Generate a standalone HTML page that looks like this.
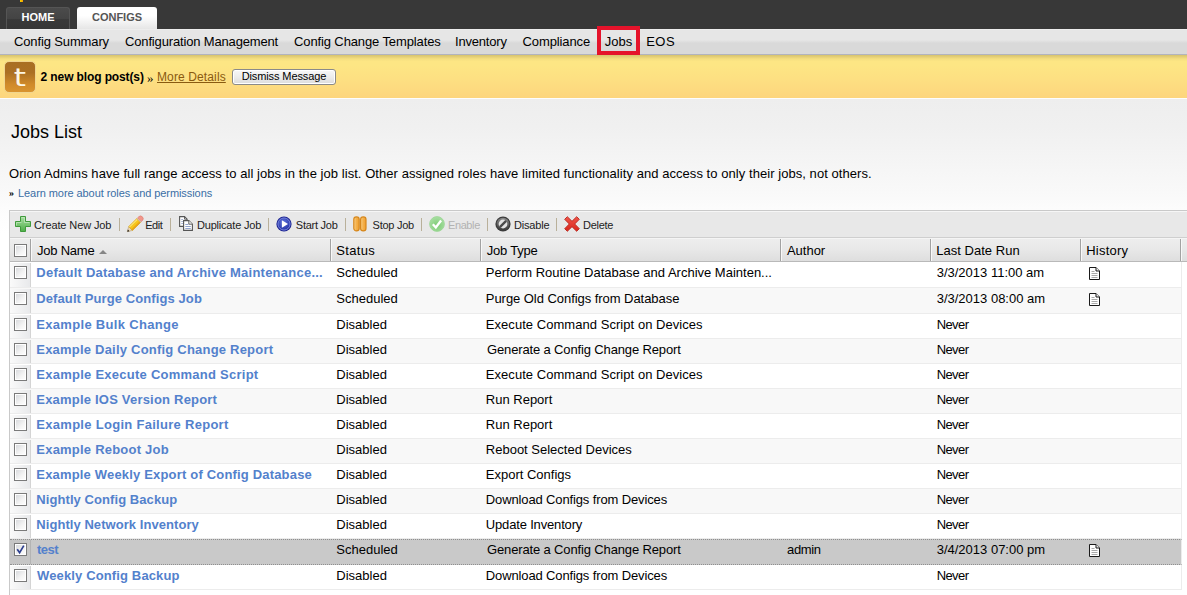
<!DOCTYPE html>
<html><head><meta charset="utf-8"><title>Jobs List</title>
<style>
*{box-sizing:border-box;margin:0;padding:0}
html,body{width:1187px;height:595px;overflow:hidden}
body{font-family:"Liberation Sans",sans-serif;font-size:13px;color:#000;background:#fff;position:relative}
i{font-style:normal}
.x{position:absolute;white-space:nowrap}
#top{position:absolute;left:0;top:0;width:1187px;height:29px;background:#383838}
#mark{position:absolute;left:20px;top:0;width:3px;height:2px;background:linear-gradient(90deg,#f5d800,#f59a00)}
.tab{position:absolute;text-align:center;border-radius:3px 3px 0 0;font-weight:bold;font-size:11px}
#home{left:6px;top:7px;width:64px;height:22px;background:linear-gradient(#4b4b4b,#444 50%,#393939 55%,#363636);border:1px solid #555;border-bottom:none;color:#fff;line-height:19px}
#configs{left:77px;top:7px;width:80px;height:22px;background:linear-gradient(#fff 0,#fff 40%,#e6e6e6 100%);color:#555;line-height:21px}
#sub{position:absolute;left:0;top:29px;width:1187px;height:26px;background:linear-gradient(#f0f0f0 0,#e6e6e6 1.5px,#e6e6e6 11px,#d9d9d9 14px,#d9d9d9 100%);border-bottom:1px solid #b2b4be}
.sn{line-height:25px;font-size:13px}
#jobsbox{position:absolute;left:597px;top:26px;width:43px;height:29px;border:4px solid #e5132b}
#note{position:absolute;left:0;top:55px;width:1187px;height:43px;background:linear-gradient(#d6c36e,#e6d077 2px,#f5df80 4px,#fde684 6.5px,#fde684 10px,#fde082 55%,#fdd57d 100%);border-bottom:0}#nline{position:absolute;left:0;top:98px;width:1187px;height:1px;background:#fdfdfd}
#ticon{position:absolute;left:4px;top:61px;width:32px;height:32px;border-radius:5px;background:linear-gradient(#a96f22,#ab7023 35%,#d08a2a 75%,#d9942e);border:1px solid #f0d58f;color:#fdf6e3;font-size:25px;line-height:31px;text-align:center;font-family:"DejaVu Sans",sans-serif}
#ticon span{display:inline-block;transform:scaleX(1.25)}
.nb{font-weight:bold;font-size:12px;line-height:43px}
.nr{font-size:13px;line-height:43px;font-family:"Liberation Serif",serif}
.nm{font-size:12px;line-height:43px;color:#8a5a10;text-decoration:underline}
#btn{position:absolute;left:232px;top:69px;width:104px;height:16px;border:1px solid #8a8a8a;border-radius:3px;background:linear-gradient(#f8f8f8,#ececec 50%,#dcdcdc);box-shadow:inset 0 0 0 1px #fff}
.bt{font-size:11px;line-height:17px}
#main{position:absolute;left:0;top:99px;width:1187px;height:496px;background:linear-gradient(#eeeeee,#f0f0f0 28px,#f5f5f5 65px,#fafafa 100px,#fdfdfd 115px,#fff 135px)}
.h1{font-size:18px;line-height:22px}
.desc{font-size:13px;line-height:17px}
.lr{font-size:10px;line-height:14px;font-weight:bold;font-family:"Liberation Serif",serif}
.learn{font-size:11px;line-height:14px;color:#3a6ea5}
#panel{position:absolute;left:9px;top:210px;width:1190px;height:400px;border:1px solid #c9c9c9;background:#fff}
#tbar{position:absolute;left:10px;top:211px;width:1177px;height:27px;background:#e8e8e8;border-top:1px solid #f6f6f6;border-bottom:1px solid #cfcfcf}
.tb{font-size:11px;line-height:27px;color:#222}
.tb.dis{color:#b2b2b2}
svg{position:absolute}
.sep{position:absolute;top:218px;width:1px;height:13px;background:#b9b09a}
#hdr{position:absolute;left:10px;top:238px;width:1177px;height:24px;background:linear-gradient(#f9f9f9 0,#ededed 1.5px,#e8e8e8 50%,#dedede 100%);border-bottom:1px solid #b9b9b9}
.hd{font-size:13px;line-height:24px}
.hs{position:absolute;top:239px;width:2px;height:22px;border-left:1px solid #a2a2a2;background:#f8f8f8}
.arr{position:absolute;left:98.500px;top:250px;width:0;height:0;border-left:4px solid transparent;border-right:4px solid transparent;border-bottom:4.500px solid #858585}
.row{position:absolute;left:10px;width:1172px;border-bottom:1px solid #ececec;border-right:1px solid #ececec;background:#fff}
.row.alt{background:#f8f8f8}
.row.sel{background:#c9c9c9;border-top:1px dotted #8f8f8f;border-bottom:1px dotted #8f8f8f;border-left:1px dotted #8f8f8f}
.cbc{position:absolute;left:0;top:1px;bottom:0;width:21px;background:linear-gradient(90deg,#fafafa,#e8e9eb);border-right:1px solid #d4d4d4}
.sel .cbc{background:#c6c6c6;border-right-color:#b4b4b4;left:-1px;top:0}
.cb{position:absolute;left:4px;top:4px;width:13px;height:13px;border:1px solid #7a7a7a;background:linear-gradient(135deg,#d4d6da,#f4f4f4 60%,#fff);box-shadow:inset 0 0 0 1px #fff}
.sel .cb{left:3px;top:3px}
.ck{position:absolute;left:0;top:0}
.rn{font-weight:bold;color:#5381cc;font-size:13px;line-height:22px}
.rc{font-size:13px;line-height:22px}
</style></head><body>
<div id="top"></div><div id="mark"></div>
<div class="tab" id="home">HOME</div>
<div class="tab" id="configs">CONFIGS</div>
<div id="sub"></div>
<div id="jobsbox"></div>
<div id="note"></div><div id="nline"></div>
<div id="ticon"><span>t</span></div>
<div id="btn"></div>
<div id="main"></div>
<div id="panel"></div>
<div id="tbar"></div>
<svg style="left:15px;top:216px" width="16" height="16" viewBox="0 0 16 16"><defs><linearGradient id="gp" x1="0" y1="0" x2="0" y2="1"><stop offset="0" stop-color="#a9dda3"/><stop offset="0.5" stop-color="#7cc775"/><stop offset="1" stop-color="#4fae49"/></linearGradient></defs><path d="M5.5 0.5h5v5h5v5h-5v5h-5v-5h-5v-5h5z" fill="url(#gp)" stroke="#3f9a3b" stroke-width="1"/><path d="M6.5 1.5h3v5h5M1.5 9.500v-3h5" fill="none" stroke="#c4e8c0" stroke-width="1" opacity=".7"/></svg><svg style="left:126px;top:215px" width="18" height="18" viewBox="0 0 18 18"><g transform="translate(1.3,16.7) rotate(-44.5)"><path d="M0 0L4.6 -2.7V2.7z" fill="#ead6b4" stroke="#b89a6a" stroke-width="0.5"/><path d="M0 0L1.9 -1.1V1.1z" fill="#111"/><rect x="4.6" y="-2.7" width="11.4" height="5.4" fill="#f6c61c"/><rect x="4.6" y="-2.7" width="11.4" height="1.5" fill="#fbe372"/><rect x="4.6" y="1.2" width="11.4" height="1.5" fill="#e9a51b"/><rect x="4.6" y="-2.7" width="11.4" height="5.4" fill="none" stroke="#d49a14" stroke-width="0.5"/><rect x="16" y="-2.7" width="1.2" height="5.4" fill="#d8b8a8"/><path d="M17.2 -2.7h1.3a2.7 2.7 0 0 1 0 5.4h-1.3z" fill="#f1968b" stroke="#dc7a70" stroke-width="0.5"/></g></svg><svg style="left:179px;top:216px" width="15" height="15" viewBox="0 0 15 15"><path d="M0.6 0.6h4.9l2.6 2.6v7.2h-7.500z" fill="#fff" stroke="#555" stroke-width="1.1"/><path d="M5.500 0.6v2.6h2.6" fill="none" stroke="#555" stroke-width="0.9"/><path d="M2.2 3.5h2M2.2 5.500h2M2.2 7.500h2" stroke="#a9b6d4" stroke-width="1"/><path d="M4.600 4.600h5.200l3.600 3.600v6.200h-8.800z" fill="#fff" stroke="#555" stroke-width="1.1"/><path d="M9.800 4.600v3.600h3.600" fill="#f2f2f2" stroke="#555" stroke-width="0.9"/><path d="M6.300 8.500h3M6.300 10.500h5.500M6.300 12.500h5.500" stroke="#93a4cc" stroke-width="1.1"/></svg><svg style="left:276px;top:216px" width="16" height="16" viewBox="0 0 16 16"><defs><radialGradient id="gs" cx="0.45" cy="0.35" r="0.75"><stop offset="0" stop-color="#5f74dc"/><stop offset="1" stop-color="#1d2a9e"/></radialGradient></defs><circle cx="8" cy="8" r="7.600" fill="#1a2290"/><circle cx="8" cy="8" r="6.100" fill="url(#gs)" stroke="#8f9cec" stroke-width="0.8"/><path d="M5.900 4.300l6.100 3.700-6.100 3.700z" fill="#fff"/></svg><svg style="left:353px;top:216px" width="14" height="16" viewBox="0 0 14 16"><defs><linearGradient id="go" x1="0" y1="0" x2="1" y2="0"><stop offset="0" stop-color="#f9d08a"/><stop offset="0.5" stop-color="#f4b04a"/><stop offset="1" stop-color="#f0a030"/></linearGradient></defs><rect x="0.800" y="0.900" width="5.400" height="14" rx="2.600" fill="url(#go)" stroke="#d6871c" stroke-width="1.200"/><rect x="7.600" y="0.900" width="5.400" height="14" rx="2.600" fill="url(#go)" stroke="#d6871c" stroke-width="1.200"/></svg><svg style="left:429px;top:216px" width="16" height="16" viewBox="0 0 16 16"><defs><radialGradient id="ge" cx="0.5" cy="0.6" r="0.6"><stop offset="0" stop-color="#7ccb74"/><stop offset="1" stop-color="#a9dfa3"/></radialGradient></defs><circle cx="8" cy="8" r="7.400" fill="url(#ge)" stroke="#9ad694" stroke-width="0.800"/><path d="M3.800 8.300l3 3.100 5.300-6.900" fill="none" stroke="#fff" stroke-width="2.300"/></svg><svg style="left:495px;top:216px" width="16" height="16" viewBox="0 0 16 16"><defs><linearGradient id="gd" x1="0" y1="0" x2="0" y2="1"><stop offset="0" stop-color="#8a8a8a"/><stop offset="1" stop-color="#3a3a3a"/></linearGradient></defs><circle cx="8" cy="8" r="7.600" fill="#3c3c3c"/><circle cx="8" cy="8" r="6.300" fill="url(#gd)"/><circle cx="8" cy="8" r="4.400" fill="#e2e2e2"/><path d="M4.900 11.100l6.200-6.200" stroke="#4a4a4a" stroke-width="2.300"/></svg><svg style="left:564px;top:216px" width="16" height="16" viewBox="0 0 16 16"><defs><linearGradient id="gx" x1="0" y1="0" x2="0" y2="1"><stop offset="0" stop-color="#f0554a"/><stop offset="1" stop-color="#d8261c"/></linearGradient></defs><path d="M0.700 3.300L3.300 0.700 8 5.300 12.700 0.700 15.300 3.300 10.700 8 15.300 12.700 12.700 15.300 8 10.700 3.300 15.300 0.700 12.700 5.300 8z" fill="url(#gx)" stroke="#b9251b" stroke-width="0.900" stroke-linejoin="round"/></svg><i class="sep" style="left:119px"></i><i class="sep" style="left:170px"></i><i class="sep" style="left:268px"></i><i class="sep" style="left:345px"></i><i class="sep" style="left:421px"></i><i class="sep" style="left:487px"></i><i class="sep" style="left:556px"></i>
<div id="hdr"></div>
<i class="hs" style="left:30px"></i><i class="hs" style="left:330px"></i><i class="hs" style="left:480px"></i><i class="hs" style="left:780px"></i><i class="hs" style="left:930px"></i><i class="hs" style="left:1080px"></i><i class="hs" style="left:1180px"></i><i class="cb" style="left:14px;top:244px"></i><i class="arr"></i>
<div class="row" style="top:262px;height:26px"><i class="cbc"></i><i class="cb"></i></div>
<svg class="doc" style="left:1089px;top:267px" width="11" height="13" viewBox="0 0 11 13"><path d="M0.5 0.5h6.5l3.5 3.5v8.5h-10z" fill="#fff" stroke="#1a1a1a" stroke-width="1"/><path d="M7 0.5v3.5h3.5" fill="#eee" stroke="#1a1a1a" stroke-width="1"/><path d="M2.5 4.5h3M2.5 6.5h6M2.5 8.5h6M2.5 10.500h6" stroke="#aaa" stroke-width="1"/></svg>
<div class="row alt" style="top:288px;height:26px"><i class="cbc"></i><i class="cb"></i></div>
<svg class="doc" style="left:1089px;top:293px" width="11" height="13" viewBox="0 0 11 13"><path d="M0.5 0.5h6.5l3.5 3.5v8.5h-10z" fill="#fff" stroke="#1a1a1a" stroke-width="1"/><path d="M7 0.5v3.5h3.5" fill="#eee" stroke="#1a1a1a" stroke-width="1"/><path d="M2.5 4.5h3M2.5 6.5h6M2.5 8.5h6M2.5 10.500h6" stroke="#aaa" stroke-width="1"/></svg>
<div class="row" style="top:314px;height:25px"><i class="cbc"></i><i class="cb"></i></div>
<div class="row alt" style="top:339px;height:25px"><i class="cbc"></i><i class="cb"></i></div>
<div class="row" style="top:364px;height:25px"><i class="cbc"></i><i class="cb"></i></div>
<div class="row alt" style="top:389px;height:25px"><i class="cbc"></i><i class="cb"></i></div>
<div class="row" style="top:414px;height:25px"><i class="cbc"></i><i class="cb"></i></div>
<div class="row alt" style="top:439px;height:25px"><i class="cbc"></i><i class="cb"></i></div>
<div class="row" style="top:464px;height:25px"><i class="cbc"></i><i class="cb"></i></div>
<div class="row alt" style="top:489px;height:25px"><i class="cbc"></i><i class="cb"></i></div>
<div class="row" style="top:514px;height:25px"><i class="cbc"></i><i class="cb"></i></div>
<div class="row alt sel" style="top:539px;height:26px"><i class="cbc"></i><i class="cb"><svg class="ck" width="11" height="11" viewBox="0 0 11 11"><path d="M2.2 5.2L4.6 8.6L8.8 1.6" fill="none" stroke="#2f4190" stroke-width="1.7"/></svg></i></div>
<svg class="doc" style="left:1089px;top:544px" width="11" height="13" viewBox="0 0 11 13"><path d="M0.5 0.5h6.5l3.5 3.5v8.5h-10z" fill="#fff" stroke="#1a1a1a" stroke-width="1"/><path d="M7 0.5v3.5h3.5" fill="#eee" stroke="#1a1a1a" stroke-width="1"/><path d="M2.5 4.5h3M2.5 6.5h6M2.5 8.5h6M2.5 10.500h6" stroke="#aaa" stroke-width="1"/></svg>
<div class="row" style="top:565px;height:25px"><i class="cbc"></i><i class="cb"></i></div>
<span id="sn1" class="x sn" style="left:14.00px;top:29px;letter-spacing:-0.131px;">Config Summary</span>
<span id="sn2" class="x sn" style="left:125.00px;top:29px;letter-spacing:-0.157px;">Configuration Management</span>
<span id="sn3" class="x sn" style="left:294.00px;top:29px;letter-spacing:-0.118px;">Config Change Templates</span>
<span id="sn4" class="x sn" style="left:455.00px;top:29px;letter-spacing:-0.188px;">Inventory</span>
<span id="sn5" class="x sn" style="left:522.60px;top:29px;letter-spacing:-0.122px;">Compliance</span>
<span id="sn6" class="x sn" style="left:604.70px;top:29px;">Jobs</span>
<span id="sn7" class="x sn" style="left:646.20px;top:29px;letter-spacing:0.500px;">EOS</span>
<span id="nb" class="x nb" style="left:40.60px;top:56px;letter-spacing:-0.118px;">2 new blog post(s)</span>
<span id="nr" class="x nr" style="left:147.00px;top:56px;">»</span>
<span id="nm" class="x nm" style="left:157.00px;top:56px;letter-spacing:0.120px;">More Details</span>
<span id="bt" class="x bt" style="left:241.70px;top:68px;letter-spacing:-0.114px;">Dismiss Message</span>
<span id="h1" class="x h1" style="left:11.00px;top:121px;">Jobs List</span>
<span id="desc" class="x desc" style="left:9.00px;top:165px;letter-spacing:0.055px;">Orion Admins have full range access to all jobs in the job list. Other assigned roles have limited functionality and access to only their jobs, not others.</span>
<span id="lr" class="x lr" style="left:9.00px;top:186px;">»</span>
<span id="learn" class="x learn" style="left:18.00px;top:186px;letter-spacing:-0.073px;">Learn more about roles and permissions</span>
<span id="tb0" class="x tb" style="left:34.00px;top:212px;letter-spacing:-0.108px;">Create New Job</span>
<span id="tb1" class="x tb" style="left:145.20px;top:212px;letter-spacing:-0.433px;">Edit</span>
<span id="tb2" class="x tb" style="left:197.00px;top:212px;letter-spacing:-0.200px;">Duplicate Job</span>
<span id="tb3" class="x tb" style="left:295.80px;top:212px;letter-spacing:-0.250px;">Start Job</span>
<span id="tb4" class="x tb" style="left:372.60px;top:212px;letter-spacing:-0.257px;">Stop Job</span>
<span id="tb5" class="x tb dis" style="left:448.00px;top:212px;letter-spacing:-0.400px;">Enable</span>
<span id="tb6" class="x tb" style="left:514.00px;top:212px;letter-spacing:-0.183px;">Disable</span>
<span id="tb7" class="x tb" style="left:583.00px;top:212px;letter-spacing:-0.280px;">Delete</span>
<span id="hd0" class="x hd" style="left:37.00px;top:239px;letter-spacing:-0.229px;">Job Name</span>
<span id="hd1" class="x hd" style="left:336.30px;top:239px;letter-spacing:0.340px;">Status</span>
<span id="hd2" class="x hd" style="left:486.70px;top:239px;letter-spacing:-0.214px;">Job Type</span>
<span id="hd3" class="x hd" style="left:786.90px;top:239px;">Author</span>
<span id="hd4" class="x hd" style="left:936.20px;top:239px;letter-spacing:0.033px;">Last Date Run</span>
<span id="hd5" class="x hd" style="left:1086.20px;top:239px;letter-spacing:0.233px;">History</span>
<span id="n0" class="x rn" style="left:36.30px;top:262px;letter-spacing:0.243px;">Default Database and Archive Maintenance...</span>
<span id="s0" class="x rc" style="left:336.30px;top:262px;">Scheduled</span>
<span id="t0" class="x rc" style="left:485.80px;top:262px;">Perform Routine Database and Archive Mainten...</span>
<span id="d0" class="x rc" style="left:936.70px;top:262px;">3/3/2013 11:00 am</span>
<span id="n1" class="x rn" style="left:36.30px;top:288px;letter-spacing:0.096px;">Default Purge Configs Job</span>
<span id="s1" class="x rc" style="left:336.30px;top:288px;">Scheduled</span>
<span id="t1" class="x rc" style="left:485.80px;top:288px;letter-spacing:-0.050px;">Purge Old Configs from Database</span>
<span id="d1" class="x rc" style="left:936.70px;top:288px;">3/3/2013 08:00 am</span>
<span id="n2" class="x rn" style="left:36.30px;top:314px;letter-spacing:0.311px;">Example Bulk Change</span>
<span id="s2" class="x rc" style="left:336.30px;top:314px;">Disabled</span>
<span id="t2" class="x rc" style="left:485.80px;top:314px;letter-spacing:0.047px;">Execute Command Script on Devices</span>
<span id="d2" class="x rc" style="left:936.70px;top:314px;letter-spacing:-0.600px;">Never</span>
<span id="n3" class="x rn" style="left:36.30px;top:339px;letter-spacing:0.212px;">Example Daily Config Change Report</span>
<span id="s3" class="x rc" style="left:336.30px;top:339px;">Disabled</span>
<span id="t3" class="x rc" style="left:487.00px;top:339px;letter-spacing:-0.140px;">Generate a Config Change Report</span>
<span id="d3" class="x rc" style="left:936.70px;top:339px;letter-spacing:-0.600px;">Never</span>
<span id="n4" class="x rn" style="left:36.30px;top:364px;letter-spacing:0.252px;">Example Execute Command Script</span>
<span id="s4" class="x rc" style="left:336.30px;top:364px;">Disabled</span>
<span id="t4" class="x rc" style="left:485.80px;top:364px;letter-spacing:0.047px;">Execute Command Script on Devices</span>
<span id="d4" class="x rc" style="left:936.70px;top:364px;letter-spacing:-0.600px;">Never</span>
<span id="n5" class="x rn" style="left:36.30px;top:389px;letter-spacing:0.204px;">Example IOS Version Report</span>
<span id="s5" class="x rc" style="left:336.30px;top:389px;">Disabled</span>
<span id="t5" class="x rc" style="left:485.80px;top:389px;">Run Report</span>
<span id="d5" class="x rc" style="left:936.70px;top:389px;letter-spacing:-0.600px;">Never</span>
<span id="n6" class="x rn" style="left:36.30px;top:414px;letter-spacing:0.289px;">Example Login Failure Report</span>
<span id="s6" class="x rc" style="left:336.30px;top:414px;">Disabled</span>
<span id="t6" class="x rc" style="left:485.80px;top:414px;">Run Report</span>
<span id="d6" class="x rc" style="left:936.70px;top:414px;letter-spacing:-0.600px;">Never</span>
<span id="n7" class="x rn" style="left:36.30px;top:439px;letter-spacing:0.218px;">Example Reboot Job</span>
<span id="s7" class="x rc" style="left:336.30px;top:439px;">Disabled</span>
<span id="t7" class="x rc" style="left:485.80px;top:439px;">Reboot Selected Devices</span>
<span id="d7" class="x rc" style="left:936.70px;top:439px;letter-spacing:-0.600px;">Never</span>
<span id="n8" class="x rn" style="left:36.30px;top:464px;letter-spacing:0.179px;">Example Weekly Export of Config Database</span>
<span id="s8" class="x rc" style="left:336.30px;top:464px;">Disabled</span>
<span id="t8" class="x rc" style="left:485.80px;top:464px;">Export Configs</span>
<span id="d8" class="x rc" style="left:936.70px;top:464px;letter-spacing:-0.600px;">Never</span>
<span id="n9" class="x rn" style="left:36.30px;top:489px;letter-spacing:0.075px;">Nightly Config Backup</span>
<span id="s9" class="x rc" style="left:336.30px;top:489px;">Disabled</span>
<span id="t9" class="x rc" style="left:485.80px;top:489px;letter-spacing:-0.129px;">Download Configs from Devices</span>
<span id="d9" class="x rc" style="left:936.70px;top:489px;letter-spacing:-0.600px;">Never</span>
<span id="n10" class="x rn" style="left:36.30px;top:514px;letter-spacing:0.058px;">Nightly Network Inventory</span>
<span id="s10" class="x rc" style="left:336.30px;top:514px;">Disabled</span>
<span id="t10" class="x rc" style="left:485.80px;top:514px;letter-spacing:-0.167px;">Update Inventory</span>
<span id="d10" class="x rc" style="left:936.70px;top:514px;letter-spacing:-0.600px;">Never</span>
<span id="n11" class="x rn" style="left:37.00px;top:539px;letter-spacing:-0.533px;">test</span>
<span id="s11" class="x rc" style="left:336.30px;top:539px;">Scheduled</span>
<span id="t11" class="x rc" style="left:487.00px;top:539px;letter-spacing:-0.140px;">Generate a Config Change Report</span>
<span id="a11" class="x rc" style="left:787.00px;top:539px;letter-spacing:-0.350px;">admin</span>
<span id="d11" class="x rc" style="left:936.70px;top:539px;">3/4/2013 07:00 pm</span>
<span id="n12" class="x rn" style="left:37.00px;top:565px;letter-spacing:0.137px;">Weekly Config Backup</span>
<span id="s12" class="x rc" style="left:336.30px;top:565px;">Disabled</span>
<span id="t12" class="x rc" style="left:485.80px;top:565px;letter-spacing:-0.129px;">Download Configs from Devices</span>
<span id="d12" class="x rc" style="left:936.70px;top:565px;letter-spacing:-0.600px;">Never</span>

</body></html>
